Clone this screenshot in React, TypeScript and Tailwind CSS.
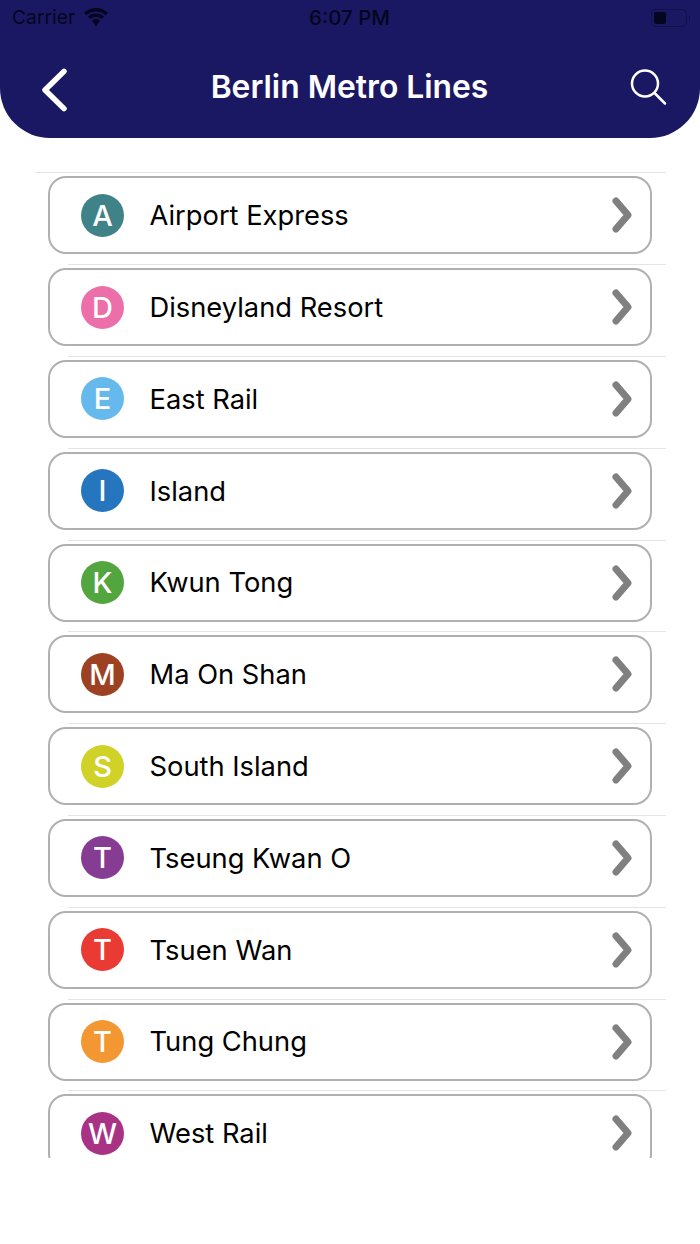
const lines = [
  { letter: 'A', name: 'Airport Express', color: 'bg-[#3f8389]' },
  { letter: 'D', name: 'Disneyland Resort', color: 'bg-[#ec6fa9]' },
  { letter: 'E', name: 'East Rail', color: 'bg-[#66b9ec]' },
  { letter: 'I', name: 'Island', color: 'bg-[#2575bf]' },
  { letter: 'K', name: 'Kwun Tong', color: 'bg-[#52a53f]' },
  { letter: 'M', name: 'Ma On Shan', color: 'bg-[#9c4222]' },
  { letter: 'S', name: 'South Island', color: 'bg-[#d0d228]' },
  { letter: 'T', name: 'Tseung Kwan O', color: 'bg-[#873c94]' },
  { letter: 'T', name: 'Tsuen Wan', color: 'bg-[#e93b33]' },
  { letter: 'T', name: 'Tung Chung', color: 'bg-[#f39733]' },
  { letter: 'W', name: 'West Rail', color: 'bg-[#a83384]' },
];

const StatusBar = () => (
  <div className="flex h-[36px] items-center justify-between pl-[12px] pr-[10px] text-[19.3px] leading-none text-[#050520]">
    <div className="flex w-[200px] items-center gap-[8px]">
      <span>Carrier</span>
      <svg width="26" height="19" viewBox="0 0 26 19" fill="#050520">
        <path d="M13 3.500c3.700 0 7 1.400 9.600 3.700L25 4.700C21.800 1.800 17.600 0 13 0S4.200 1.800 1 4.700l2.400 2.500C6 4.900 9.300 3.500 13 3.500z" />
        <path d="M13 9c2.200 0 4.200.8 5.700 2.100l2.400-2.500C18.900 6.700 16.100 5.500 13 5.500s-5.900 1.200-8.100 3.100l2.400 2.500C8.800 9.800 10.800 9 13 9z" />
        <path d="M13 11c-1.600 0-3 .6-4.100 1.500L13 18.500l4.100-6C16 11.600 14.600 11 13 11z" />
      </svg>
    </div>
    <span className="font-medium text-[20.5px]">6:07 PM</span>
    <div className="flex w-[203px] items-center justify-end">
      <div className="flex h-[18px] w-[36px] items-center rounded-[5px] border-[1.5px] border-[#11114a] p-[2px]">
        <div className="h-full w-[12px] rounded-[2px] bg-[#050520]" />
      </div>
      <div className="ml-[2px] h-[6px] w-[1.5px] rounded-r bg-[#11114a]" />
    </div>
  </div>
);

const NavBar = () => (
  <div className="flex items-center justify-between pl-[40px] pr-[33px] pt-[23px]">
    <svg className="mt-[8px]" width="32" height="48" viewBox="0 0 32 48" fill="none" stroke="white" strokeWidth="5.500" strokeLinecap="round" strokeLinejoin="round">
      <path d="M24 5 L5 24 L24 43" transform="translate(0 -.5) scale(1 .98)" />
    </svg>
    <h1 className="mr-[2px] text-[31.8px] font-semibold leading-none text-white">Berlin Metro Lines</h1>
    <svg width="38" height="38" viewBox="0 0 38 38" fill="none" stroke="white" strokeWidth="2.500" strokeLinecap="round">
      <circle cx="16" cy="15.500" r="13" />
      <path d="M25.500 25 L36 35.500" />
    </svg>
  </div>
);

const Chevron = () => (
  <svg width="20" height="36" viewBox="0 0 20 36" fill="none" stroke="#808080" strokeWidth="7" strokeLinecap="round" strokeLinejoin="round">
    <path d="M4 4 L16 18 L4 32" />
  </svg>
);

export default function App() {
  return (
    <div className="h-[1244px] w-[700px] overflow-hidden bg-white font-['Inter','Noto_Sans',sans-serif]">
      <header className="h-[138px] rounded-b-[50px] bg-[#1b1863]">
        <StatusBar />
        <NavBar />
      </header>
      <div className="ml-[35px] mr-[34px] mt-[34.4px] h-[986px] overflow-hidden">
        {lines.map((line, i) => (
          <div key={line.name} className="h-[91.8px]">
            <div className={`h-px bg-[#e4e4e4] ${i === 0 ? '' : 'ml-[33px]'}`} />
            <div className="ml-[13px] mr-[14px] mt-[3px] flex h-[78px] items-center rounded-[18px] border-2 border-[#b0b0b0] pl-[31px] pr-[18.5px]">
              <div className={`flex h-[43px] w-[43px] shrink-0 items-center justify-center rounded-full text-[29px] font-medium leading-none text-white ${line.color}`}>
                {line.letter}
              </div>
              <span className="ml-[25.5px] mt-[1px] flex-1 text-[27.3px] leading-none text-black">{line.name}</span>
              <Chevron />
            </div>
          </div>
        ))}
      </div>
    </div>
  );
}
